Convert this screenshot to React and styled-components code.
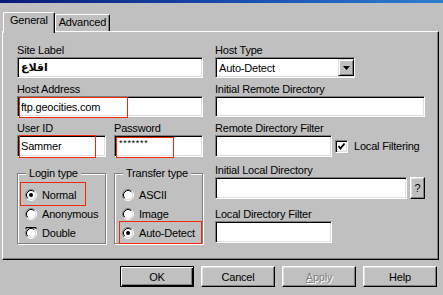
import React from 'react';
import styled, { createGlobalStyle } from "styled-components";

const Global = createGlobalStyle`
  body {
    margin: 0;
    background: #c0c0c0;
  }
`;

const Window = styled.div`
  width: 443px;
  height: 295px;
  background: #c0c0c0;
  display: flex;
  flex-direction: column;
  overflow: hidden;
  font-family: "Liberation Sans", Arial, sans-serif;
  font-size: 11px;
  letter-spacing: -0.2px;
  color: #000;
`;

const TitleStrip = styled.div`
  height: 3px;
  background: linear-gradient(90deg, #0a1a78, #1a4fb0 55%, #2f7fd0);
`;

const TabRow = styled.div`
  display: flex;
  align-items: flex-end;
  height: 19px;
  margin: 9px 0 0 3px;
`;

const Tab = styled.div`
  position: relative;
  z-index: ${p => (p.$active ? 1 : 0)};
  box-sizing: border-box;
  height: ${p => (p.$active ? 21 : 17)}px;
  margin-bottom: ${p => (p.$active ? -2 : 0)}px;
  padding: 1px ${p => (p.$active ? 6 : 3)}px 0;
  line-height: 13px;
  background: #c0c0c0;
  border-top: 1px solid #fff;
  border-left: 1px solid #fff;
  border-right: 1px solid #000;
  border-radius: 2px 2px 0 0;
  box-shadow: inset -1px 0 #808080;
  white-space: nowrap;
`;

const Panel = styled.div`
  box-sizing: border-box;
  height: 229px;
  margin: 0 4px 0 2px;
  padding: 12px 0 0 14px;
  border-top: 1px solid #fff;
  border-left: 1px solid #fff;
  border-right: 1px solid #000;
  border-bottom: 1px solid #000;
  box-shadow: inset -1px -1px #808080;
  display: flex;
  gap: 12px;
`;

const Column = styled.div`
  display: flex;
  flex-direction: column;
  width: ${p => p.$w}px;
`;

const Pair = styled.div`
  display: grid;
  grid-template-columns: 89px 89px;
  gap: 8px;
  margin-top: ${p => p.$mt || 0}px;
`;

const Field = styled.div`
  display: flex;
  flex-direction: column;
  margin-top: ${p => p.$mt || 0}px;
`;

const Label = styled.div`
  height: 13px;
  line-height: 13px;
  white-space: nowrap;
`;

const Line = styled.div`
  display: flex;
  align-items: center;
`;

const TextBox = styled.div`
  position: relative;
  box-sizing: border-box;
  width: ${p => p.$w}px;
  height: ${p => p.$h || 22}px;
  padding-left: 3px;
  background: #fff;
  border: 1px solid;
  border-color: #808080 #fff #fff #808080;
  box-shadow: inset 1px 1px #000, inset -1px -1px #dfdfdf;
  display: flex;
  align-items: center;
  white-space: nowrap;
`;

const Arabic = styled.span`
  font-family: "DejaVu Sans", "Liberation Sans", sans-serif;
  font-size: 11px;
  font-weight: bold;
  letter-spacing: 0;
`;

const Stars = styled.span`
  font-size: 9px;
  letter-spacing: 0.7px;
  margin: -6px 0 0 1px;
`;

const RedMark = styled.div`
  position: absolute;
  left: ${p => p.$l}px;
  top: ${p => p.$t}px;
  width: ${p => p.$w}px;
  height: ${p => p.$h}px;
  box-sizing: border-box;
  border: 1px solid #f02810;
  pointer-events: none;
`;

const DropButton = styled.div`
  margin-left: auto;
  box-sizing: border-box;
  width: 16px;
  height: 17px;
  background: #c0c0c0;
  border: 1px solid;
  border-color: #dfdfdf #000 #000 #dfdfdf;
  box-shadow: inset 1px 1px #fff, inset -1px -1px #808080;
  display: flex;
  align-items: center;
  justify-content: center;
`;

const CheckBox = styled.div`
  box-sizing: border-box;
  width: 13px;
  height: 13px;
  margin: 0 6px 0 3px;
  background: #fff;
  border: 1px solid;
  border-color: #808080 #fff #fff #808080;
  box-shadow: inset 1px 1px #000, inset -1px -1px #dfdfdf;
  display: flex;
  align-items: center;
  justify-content: center;
`;

const SmallButton = styled.div`
  box-sizing: border-box;
  width: 15px;
  height: 22px;
  margin-left: 3px;
  background: #c0c0c0;
  border: 1px solid;
  border-color: #fff #000 #000 #fff;
  box-shadow: inset -1px -1px #808080, inset 1px 1px #dfdfdf;
  display: flex;
  align-items: center;
  justify-content: center;
`;

const GroupBox = styled.div`
  box-sizing: border-box;
  height: 71px;
  padding: 0 0 1px 7px;
  border: 1px solid #808080;
  box-shadow: inset 1px 1px #fff, 1px 1px #fff;
  display: flex;
  flex-direction: column;
`;

const Legend = styled.div`
  align-self: flex-start;
  height: 13px;
  line-height: 13px;
  margin: -7px 0 5px 1px;
  padding: 0 3px;
  background: #c0c0c0;
`;

const RadioRow = styled.div`
  position: relative;
  height: 19px;
  display: flex;
  align-items: center;
  gap: 5px;
  white-space: nowrap;
`;

const ButtonRow = styled.div`
  display: flex;
  justify-content: flex-end;
  gap: 7px;
  margin: 6px 6px 0 0;
`;

const Button = styled.div`
  box-sizing: border-box;
  width: 74px;
  height: 21px;
  background: #c0c0c0;
  border: 1px solid;
  border-color: ${p => (p.$default ? "#000" : "#fff #000 #000 #fff")};
  box-shadow: ${p =>
    p.$default
      ? "inset 1px 1px #fff, inset -1px -1px #000, inset -2px -2px #808080"
      : "inset -1px -1px #808080, inset 1px 1px #dfdfdf"};
  display: flex;
  align-items: center;
  justify-content: center;
  color: ${p => (p.$disabled ? "#808080" : "#000")};
  text-shadow: ${p => (p.$disabled ? "1px 1px #fff" : "none")};
`;

const Radio = ({ checked, bar }) => (
    <svg width="12" height="12" viewBox="0 0 12 12">
        <circle cx="6" cy="6" r="4.5" fill="#fff" />
        <path d="M2.11 9.89 A5.5 5.5 0 0 1 9.89 2.11" stroke="#808080" fill="none" />
        <path d="M9.89 2.11 A5.5 5.5 0 0 1 2.11 9.89" stroke="#fff" fill="none" />
        <path d="M2.82 9.18 A4.5 4.5 0 0 1 9.18 2.82" stroke="#000" fill="none" />
        <path d="M9.18 2.82 A4.5 4.5 0 0 1 2.82 9.18" stroke="#dfdfdf" fill="none" />
        {checked && <circle cx="6" cy="6" r="2" fill="#000" />}
        {bar && <path d="M1 0.5 H11 M1 0.5 V2 M11 0.5 V2" stroke="#000" fill="none" />}
    </svg>
);

const App = () => {
    return (
        <Window>
            <Global />
            <TitleStrip />
            <TabRow>
                <Tab $active>General</Tab>
                <Tab>Advanced</Tab>
            </TabRow>
            <Panel>
                <Column $w={186}>
                    <Field>
                        <Label>Site Label</Label>
                        <TextBox $w={186} $h={21}><Arabic>اقلاع</Arabic></TextBox>
                    </Field>
                    <Field $mt={5}>
                        <Label>Host Address</Label>
                        <TextBox $w={186} $h={21}>
                            ftp.geocities.com
                            <RedMark $l={1} $t={0} $w={109} $h={21} />
                        </TextBox>
                    </Field>
                    <Pair $mt={5}>
                        <Field>
                            <Label>User ID</Label>
                            <TextBox $w={89}>
                                Sammer
                                <RedMark $l={1} $t={-1} $w={77} $h={23} />
                            </TextBox>
                        </Field>
                        <Field>
                            <Label>Password</Label>
                            <TextBox $w={89}>
                                <Stars>*******</Stars>
                                <RedMark $l={1} $t={1} $w={58} $h={21} />
                            </TextBox>
                        </Field>
                    </Pair>
                    <Pair $mt={16}>
                        <GroupBox>
                            <Legend>Login type</Legend>
                            <RadioRow>
                                <Radio checked />Normal
                                <RedMark $l={-5} $t={-3} $w={66} $h={24} />
                            </RadioRow>
                            <RadioRow><Radio />Anonymous</RadioRow>
                            <RadioRow><Radio bar />Double</RadioRow>
                        </GroupBox>
                        <GroupBox>
                            <Legend>Transfer type</Legend>
                            <RadioRow><Radio />ASCII</RadioRow>
                            <RadioRow><Radio />Image</RadioRow>
                            <RadioRow>
                                <Radio checked />Auto-Detect
                                <RedMark $l={-3} $t={-2} $w={83} $h={23} />
                            </RadioRow>
                        </GroupBox>
                    </Pair>
                </Column>
                <Column $w={212}>
                    <Field>
                        <Label>Host Type</Label>
                        <TextBox $w={140} $h={21}>
                            Auto-Detect
                            <DropButton>
                                <svg width="7" height="4" viewBox="0 0 7 4">
                                    <polygon points="0,0 7,0 3.5,4" fill="#000" />
                                </svg>
                            </DropButton>
                        </TextBox>
                    </Field>
                    <Field $mt={5}>
                        <Label>Initial Remote Directory</Label>
                        <TextBox $w={210} $h={21} />
                    </Field>
                    <Field $mt={5}>
                        <Label>Remote Directory Filter</Label>
                        <Line>
                            <TextBox $w={117} />
                            <CheckBox>
                                <svg width="9" height="9" viewBox="0 0 9 9">
                                    <polyline points="1.5,4 3.5,6.5 7.5,1.5" stroke="#000" strokeWidth="1.8" fill="none" />
                                </svg>
                            </CheckBox>
                            Local Filtering
                        </Line>
                    </Field>
                    <Field $mt={7}>
                        <Label>Initial Local Directory</Label>
                        <Line>
                            <TextBox $w={192} />
                            <SmallButton>?</SmallButton>
                        </Line>
                    </Field>
                    <Field $mt={9}>
                        <Label>Local Directory Filter</Label>
                        <TextBox $w={117} />
                    </Field>
                </Column>
            </Panel>
            <ButtonRow>
                <Button $default>OK</Button>
                <Button>Cancel</Button>
                <Button $disabled><span><u>A</u>pply</span></Button>
                <Button>Help</Button>
            </ButtonRow>
        </Window>
    );
};

export default App;
